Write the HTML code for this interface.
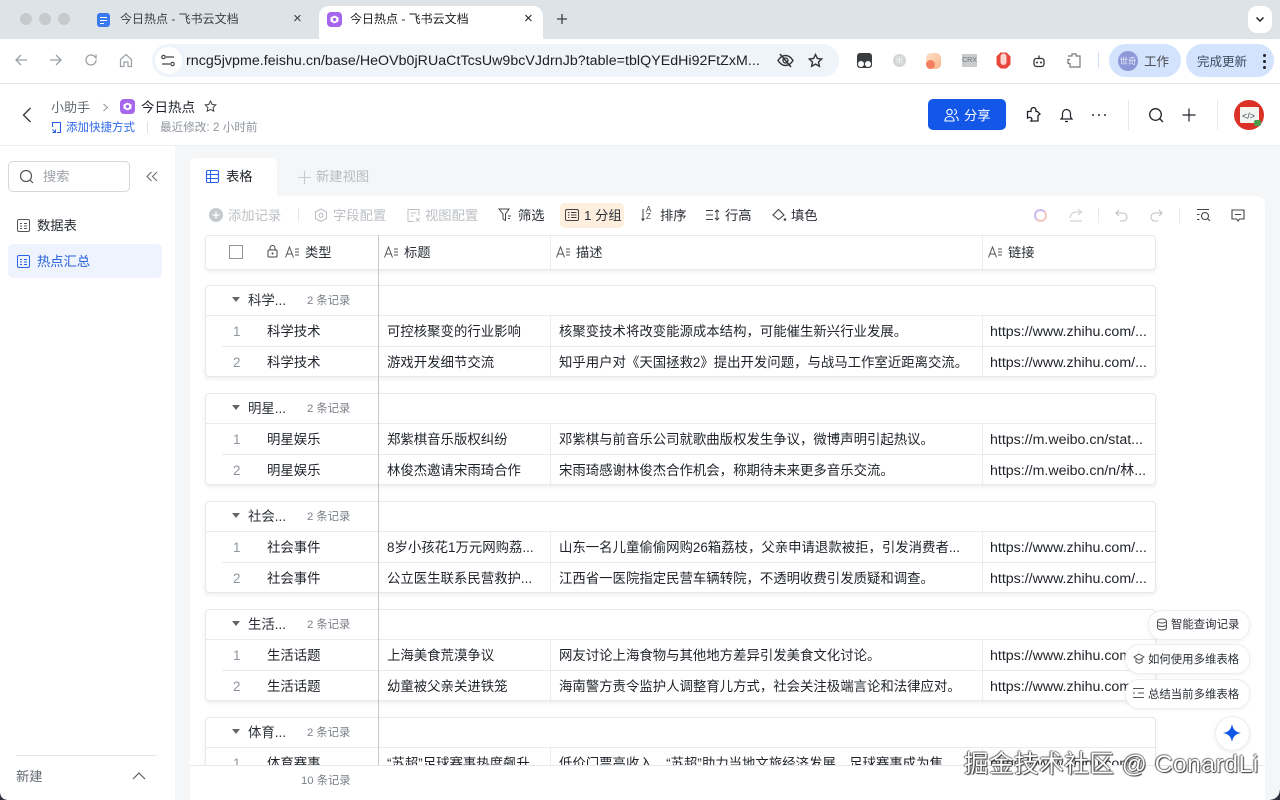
<!DOCTYPE html>
<html><head><meta charset="utf-8"><style>
html,body{margin:0;padding:0;width:1280px;height:800px;overflow:hidden;background:#fff}
body{position:relative;font-family:"Liberation Sans","Noto Sans CJK SC",sans-serif;color:#1f2329;font-size:13.4px}
.a{position:absolute}
.t{position:absolute;white-space:nowrap;line-height:18px;transform:translateY(1px)}
.n{transform:none}
.u{font-size:14.2px}
svg{position:absolute;overflow:visible}
.g{position:absolute;left:205px;width:949px;height:90px;border:1px solid #e8e9eb;border-radius:4px;background:#fff;box-shadow:0 2px 4px rgba(0,0,0,.07)}
.ln{position:absolute;background:#e9eaec}
</style></head><body>
<!-- chrome -->
<div class="a" style="left:0;top:0;width:1280px;height:39px;background:#dee3e8"></div>
<div class="a" style="left:20px;top:13px;width:12px;height:12px;border-radius:50%;background:#c6cacd"></div>
<div class="a" style="left:39px;top:13px;width:12px;height:12px;border-radius:50%;background:#c6cacd"></div>
<div class="a" style="left:58px;top:13px;width:12px;height:12px;border-radius:50%;background:#c6cacd"></div>
<div class="a" style="left:97px;top:13px;width:13px;height:14px;border-radius:3px;background:#3a78ee"></div>
<div class="a" style="left:100px;top:17px;width:7px;height:1px;background:#fff"></div>
<div class="a" style="left:100px;top:20px;width:7px;height:1px;background:#fff"></div>
<div class="a" style="left:100px;top:23px;width:4px;height:1px;background:#fff"></div>
<div class="t n" style="left:120px;top:10px;font-size:12px;color:#3c4043">今日热点 - 飞书云文档</div>
<div class="t n" style="left:293px;top:10px;font-size:15px;color:#3c4043">×</div>
<div class="a" style="left:319px;top:6px;width:224px;height:33px;background:#fff;border-radius:10px 10px 0 0"></div>
<div class="a" style="left:327px;top:12px;width:15px;height:15px;border-radius:4px;background:#a565ec"></div>
<svg style="left:330px;top:15px" width="9" height="9"><path d="M4.500 .5L8.500 2.500V6.500L4.500 8.500 .5 6.500V2.500z" fill="#fff"/><circle cx="4.500" cy="4.500" r="1.700" fill="#a565ec"/></svg>
<div class="t n" style="left:350px;top:10px;font-size:12px;color:#202124">今日热点 - 飞书云文档</div>
<div class="t n" style="left:524px;top:10px;font-size:15px;color:#202124">×</div>
<svg style="left:556px;top:13px" width="12" height="12"><path d="M6 1v10M1 6h10" stroke="#3c4043" stroke-width="1.300"/></svg>
<div class="a" style="left:1248px;top:6px;width:24px;height:27px;background:#fff;border-radius:9px"></div>
<svg style="left:1255px;top:16px" width="10" height="7"><path d="M1.500 1.500L5 5l3.500-3.500" stroke="#222" stroke-width="1.500" fill="none"/></svg>
<div class="a" style="left:0;top:39px;width:1280px;height:44px;background:#fff;border-radius:9px 9px 0 0"></div>
<div class="a" style="left:0;top:83px;width:1280px;height:1px;background:#e5e7ea"></div>
<svg style="left:14px;top:53px" width="14" height="14"><path d="M13 7H2M7 2L2 7l5 5" stroke="#9aa0a6" stroke-width="1.300" fill="none"/></svg>
<svg style="left:49px;top:53px" width="14" height="14"><path d="M1 7h11M7 2l5 5-5 5" stroke="#9aa0a6" stroke-width="1.300" fill="none"/></svg>
<svg style="left:84px;top:53px" width="14" height="14"><path d="M12 7a5 5 0 1 1-1.600-3.700L12 5V1.500" stroke="#9aa0a6" stroke-width="1.300" fill="none"/></svg>
<svg style="left:119px;top:53px" width="14" height="15"><path d="M1.500 6.500L7 1.500l5.500 5V13.500H9V9H5v4.500H1.500z" stroke="#9aa0a6" stroke-width="1.200" fill="none"/></svg>
<div class="a" style="left:152px;top:44px;width:687px;height:33px;border-radius:17px;background:#eff3fa"></div>
<div class="a" style="left:155px;top:47px;width:27px;height:27px;border-radius:50%;background:#fff"></div>
<svg style="left:161px;top:54px" width="14" height="13"><path d="M5 3h8M1 10h8" stroke="#444" stroke-width="1.300"/><circle cx="2.500" cy="3" r="1.700" fill="none" stroke="#444" stroke-width="1.200"/><circle cx="11.500" cy="10" r="1.700" fill="none" stroke="#444" stroke-width="1.200"/></svg>
<div class="t n" style="left:186px;top:52px;font-size:14.180px;color:#202124;letter-spacing:.05px">rncg5jvpme.feishu.cn/base/HeOVb0jRUaCtTcsUw9bcVJdrnJb?table=tblQYEdHi92FtZxM...</div>
<svg style="left:777px;top:53px" width="17" height="15"><path d="M1 7.500C3.500 3.500 6 2.500 8.500 2.500s5 1 7.500 5c-2.500 4-5 5-7.500 5S3.500 11.500 1 7.500z" stroke="#333" stroke-width="1.400" fill="none"/><circle cx="8.500" cy="7.500" r="2.500" fill="none" stroke="#333" stroke-width="1.300"/><path d="M3 1l11 13" stroke="#333" stroke-width="1.500"/></svg>
<svg style="left:808px;top:53px" width="15" height="15"><path d="M7.500 1.500l1.900 4 4.300.5-3.200 3 .9 4.300-3.900-2.200-3.900 2.200.9-4.300-3.200-3 4.300-.5z" stroke="#333" stroke-width="1.400" fill="none"/></svg>
<div class="a" style="left:857px;top:53px;width:15px;height:15px;border-radius:3px;background:#3a3d40"></div>
<div class="a" style="left:858px;top:61px;width:6px;height:6px;border-radius:50%;background:#fff"></div>
<div class="a" style="left:865px;top:61px;width:6px;height:6px;border-radius:50%;background:#fff"></div>
<div class="a" style="left:893px;top:54px;width:13px;height:13px;border-radius:50%;background:#d3d5d7"></div>
<div class="t n" style="left:893px;top:52px;width:13px;text-align:center;font-size:8px;color:#f4f4f4">米</div>
<div class="a" style="left:926px;top:53px;width:15px;height:16px;border-radius:5px;background:linear-gradient(135deg,#fde3c8,#f8b48a)"></div>
<div class="a" style="left:926px;top:60px;width:9px;height:9px;border-radius:50%;background:#f28060"></div>
<div class="a" style="left:962px;top:54px;width:15px;height:13px;background:#c9cbcd"></div>
<div class="t n" style="left:962px;top:52px;font-size:7px;width:15px;text-align:center;color:#6f7275">CRX</div>
<svg style="left:996px;top:52px" width="15" height="17"><path d="M4.500 .5h6L14.500 4.500v8l-4 4h-6L.5 12.500v-8z" fill="#e8463c"/><path d="M4.500 7V4.500a1 1 0 0 1 6 0V10a3 3 0 0 1-6 0z" fill="#fbd5d0"/></svg>
<svg style="left:1032px;top:54px" width="14" height="14"><rect x="2" y="4.500" width="10" height="8" rx="2.500" fill="none" stroke="#333" stroke-width="1.300"/><path d="M7 1.500v3" stroke="#333" stroke-width="1.300"/><circle cx="5" cy="8.500" r="1" fill="#333"/><circle cx="9" cy="8.500" r="1" fill="#333"/></svg>
<svg style="left:1066px;top:52px" width="16" height="17"><path d="M2 4h4V2h4v2h4v11H4v-3.500H2V7.500h2" stroke="#777" stroke-width="1.200" fill="none"/></svg>
<div class="a" style="left:1098px;top:52px;width:1px;height:16px;background:#cfe0f5"></div>
<div class="a" style="left:1109px;top:44px;width:72px;height:33px;border-radius:17px;background:#d3e3fd"></div>
<div class="a" style="left:1118px;top:51px;width:20px;height:20px;border-radius:50%;background:#8c97d8"></div>
<div class="t n" style="left:1118px;top:52px;width:20px;text-align:center;font-size:8.500px;color:#e6e9fa">世奇</div>
<div class="t" style="left:1144px;top:52px;font-size:12.500px;color:#44474a">工作</div>
<div class="a" style="left:1186px;top:44px;width:88px;height:33px;border-radius:17px;background:#d3e3fd"></div>
<div class="t" style="left:1197px;top:52px;font-size:12.500px;color:#3c4a5c">完成更新</div>
<div class="a" style="left:1263px;top:54px;width:3px;height:3px;border-radius:50%;background:#222"></div>
<div class="a" style="left:1263px;top:60px;width:3px;height:3px;border-radius:50%;background:#222"></div>
<div class="a" style="left:1263px;top:66px;width:3px;height:3px;border-radius:50%;background:#222"></div>

<!-- app header -->
<svg style="left:21px;top:107px" width="12" height="16"><path d="M9.500 1L2.500 8l7 7" stroke="#333" stroke-width="1.300" fill="none"/></svg>
<div class="t" style="left:51px;top:98px;font-size:13px;color:#646a73">小助手</div>
<svg style="left:102px;top:103px" width="7" height="9"><path d="M1.500 1l4 3.500-4 3.500" stroke="#8f959e" stroke-width="1" fill="none"/></svg>
<div class="a" style="left:120px;top:99px;width:15px;height:15px;border-radius:4px;background:#a565ec"></div>
<svg style="left:123px;top:102px" width="9" height="9"><path d="M4.500 .5L8.500 2.500V6.500L4.500 8.500 .5 6.500V2.500z" fill="#fff"/><circle cx="4.500" cy="4.500" r="1.700" fill="#a565ec"/></svg>
<div class="t" style="left:141px;top:98px;font-size:13.500px;color:#1f2329">今日热点</div>
<svg style="left:204px;top:100px" width="13" height="13"><path d="M6.500 1l1.600 3.400 3.700.5-2.700 2.600.7 3.700-3.300-1.800-3.300 1.800.7-3.700L1.200 4.900l3.700-.5z" stroke="#444" stroke-width="1" fill="none"/></svg>
<svg style="left:51px;top:121px" width="11" height="13"><path d="M1.500 6V1.500h8v10H6M1.500 8.500l3 3M4.500 8.500v3h-3" stroke="#2a62e8" stroke-width="1.100" fill="none"/></svg>
<div class="t" style="left:66px;top:118px;font-size:11.500px;color:#2f6ae8">添加快捷方式</div>
<div class="a" style="left:147px;top:122px;width:1px;height:11px;background:#dee0e3"></div>
<div class="t" style="left:160px;top:118px;font-size:11.500px;color:#8f959e;letter-spacing:.1px">最近修改: 2 小时前</div>
<div class="a" style="left:928px;top:99px;width:78px;height:31px;border-radius:5px;background:#1257e8"></div>
<svg style="left:944px;top:108px" width="15" height="14"><circle cx="5.500" cy="4" r="2.700" fill="none" stroke="#fff" stroke-width="1.100"/><path d="M1 13c0-3 2-4.500 4.500-4.500S10 10 10 13zM10 1.500a2.500 2.500 0 0 1 0 5M12 8.500c1.300.6 2.200 2 2.200 4.500" fill="none" stroke="#fff" stroke-width="1.100"/></svg>
<div class="t" style="left:964px;top:106px;font-size:13.300px;color:#fff">分享</div>
<svg style="left:1026px;top:106px" width="16" height="17"><path d="M1.500 5.500h3.500c-.5-2.500 1-4 2.500-4s3 1.500 2.500 4h1.500l2.500 2.500-2 1.500v5.500H5c1.500-1.500 1-3-.5-3.500-1-.3-2 0-3 .5z" stroke="#1f2329" stroke-width="1.300" fill="none"/></svg>
<svg style="left:1059px;top:107px" width="15" height="16"><path d="M2 12h11l-1.500-2V6.500a4 4 0 0 0-8 0V10zM6 14.500h3" stroke="#1f2329" stroke-width="1.200" fill="none"/></svg>
<div class="a" style="left:1092px;top:114px;width:2px;height:2px;border-radius:50%;background:#333"></div>
<div class="a" style="left:1098px;top:114px;width:2px;height:2px;border-radius:50%;background:#333"></div>
<div class="a" style="left:1104px;top:114px;width:2px;height:2px;border-radius:50%;background:#333"></div>
<div class="a" style="left:1128px;top:100px;width:1px;height:30px;background:#e8e9eb"></div>
<svg style="left:1148px;top:107px" width="17" height="17"><circle cx="7.500" cy="7.500" r="5.800" fill="none" stroke="#1f2329" stroke-width="1.300"/><path d="M11.500 11.500l3.500 3.500" stroke="#1f2329" stroke-width="1.300"/></svg>
<svg style="left:1182px;top:108px" width="14" height="14"><path d="M7 .5v13M.5 7h13" stroke="#1f2329" stroke-width="1.200"/></svg>
<div class="a" style="left:1217px;top:100px;width:1px;height:30px;background:#e8e9eb"></div>
<div class="a" style="left:1234px;top:100px;width:30px;height:30px;border-radius:50%;background:#dc3127"></div>
<div class="a" style="left:1240px;top:107px;width:19px;height:16px;background:#f3f3f0;border-radius:1px"></div>
<div class="t n" style="left:1242px;top:107px;font-size:9px;color:#345;">&lt;/&gt;</div>
<div class="a" style="left:1254px;top:120px;width:7px;height:6px;background:#4c9a4c;border-radius:2px"></div>

<!-- page -->
<div class="a" style="left:0;top:145px;width:1280px;height:1px;background:#eceef0"></div>
<div class="a" style="left:175px;top:146px;width:1105px;height:654px;background:#f5f6f7"></div>
<div class="a" style="left:0;top:146px;width:175px;height:654px;background:#fff"></div>
<!-- sidebar -->
<div class="a" style="left:8px;top:161px;width:120px;height:29px;border:1px solid #d6d8db;border-radius:5px"></div>
<svg style="left:19px;top:169px" width="16" height="16"><circle cx="7" cy="7" r="5.500" fill="none" stroke="#555" stroke-width="1.200"/><path d="M11 11l3 3" stroke="#555" stroke-width="1.200"/></svg>
<div class="t" style="left:43px;top:167px;font-size:13.300px;color:#a0a4aa">搜索</div>
<svg style="left:146px;top:171px" width="12" height="11"><path d="M5.500 1L1 5.500 5.500 10M11 1L6.500 5.500 11 10" stroke="#666" stroke-width="1" fill="none"/></svg>
<div class="a" style="left:8px;top:244px;width:154px;height:34px;border-radius:5px;background:#eef3fe"></div>
<svg style="left:17px;top:219px" width="13" height="13"><rect x=".5" y=".5" width="12" height="12" rx="1.500" fill="none" stroke="#555" stroke-width="1"/><path d="M3 4.500h2M7 4.500h3M3 7h2M7 7h3M3 9.500h2M7 9.500h3" stroke="#555" stroke-width="1"/></svg>
<div class="t" style="left:37px;top:216px;font-size:13.300px;color:#2b2f36">数据表</div>
<svg style="left:17px;top:255px" width="13" height="13"><rect x=".5" y=".5" width="12" height="12" rx="1.500" fill="none" stroke="#2a62e8" stroke-width="1"/><path d="M3 4.500h2M7 4.500h3M3 7h2M7 7h3M3 9.500h2M7 9.500h3" stroke="#2a62e8" stroke-width="1"/></svg>
<div class="t" style="left:37px;top:252px;font-size:13.300px;color:#2a62d8">热点汇总</div>
<div class="a" style="left:16px;top:755px;width:141px;height:1px;background:#e6e8ea"></div>
<div class="t" style="left:16px;top:767px;font-size:13.300px;color:#646a73">新建</div>
<svg style="left:132px;top:771px" width="14" height="9"><path d="M1 8l6-6 6 6" stroke="#555" stroke-width="1.100" fill="none"/></svg>

<!-- main panel -->
<div class="a" style="left:190px;top:158px;width:87px;height:40px;background:#fff;border-radius:6px 6px 0 0"></div>
<div class="a" style="left:190px;top:196px;width:1075px;height:604px;background:#fff;border-radius:0 8px 0 0"></div>
<svg style="left:206px;top:170px" width="13" height="13"><rect x=".5" y=".5" width="12" height="12" rx="1.500" fill="none" stroke="#2a62e8" stroke-width="1.100"/><path d="M0 4.500h13M0 8.500h13M4.500 0v13" stroke="#2a62e8" stroke-width="1.100"/></svg>
<div class="t" style="left:226px;top:167px;font-size:13.300px;color:#1f2329">表格</div>
<svg style="left:298px;top:171px" width="13" height="13"><path d="M6.500 0v13M0 6.500h13" stroke="#c6c9cd" stroke-width="1.100"/></svg>
<div class="t" style="left:316px;top:167px;font-size:13.300px;color:#b8bcc1">新建视图</div>
<!-- toolbar -->
<div class="a" style="left:209px;top:208px;width:14px;height:14px;border-radius:50%;background:#c6c9cd"></div>
<svg style="left:212px;top:211px" width="8" height="8"><path d="M4 .5v7M.5 4h7" stroke="#fff" stroke-width="1.300"/></svg>
<div class="t" style="left:228px;top:206px;font-size:13.300px;color:#bcc0c5">添加记录</div>
<div class="a" style="left:298px;top:208px;width:1px;height:14px;background:#e8e9eb"></div>
<svg style="left:314px;top:208px" width="14" height="15"><path d="M7 1l5.500 3v6.500L7 13.500 1.500 10.500V4z" stroke="#bcc0c5" stroke-width="1.100" fill="none"/><circle cx="7" cy="7.300" r="2" fill="none" stroke="#bcc0c5" stroke-width="1.100"/></svg>
<div class="t" style="left:333px;top:206px;font-size:13.300px;color:#bcc0c5">字段配置</div>
<svg style="left:407px;top:209px" width="14" height="13"><path d="M7 12.500H1V.5h11v6M3.500 4h6M3.500 7h3M9 9l3.500 3.500M12.500 9L9 12.500" stroke="#bcc0c5" stroke-width="1" fill="none"/></svg>
<div class="t" style="left:425px;top:206px;font-size:13.300px;color:#bcc0c5">视图配置</div>
<svg style="left:498px;top:208px" width="15" height="14"><path d="M1 1h10L7.500 6v6.500L5 11V6zM10 8h3M10 10.500h2" stroke="#444" stroke-width="1" fill="none"/></svg>
<div class="t" style="left:518px;top:206px;font-size:13.300px;color:#2b2f36">筛选</div>
<div class="a" style="left:560px;top:203px;width:64px;height:25px;border-radius:5px;background:#fdeede"></div>
<svg style="left:565px;top:209px" width="14" height="12"><rect x=".5" y=".5" width="13" height="11" rx="1.500" fill="none" stroke="#444" stroke-width="1"/><path d="M3 3.500h1.500M6 3.500h5.500M3 6h1.500M6 6h5.500M3 8.500h1.500M6 8.500h5.500" stroke="#444" stroke-width=".9"/></svg>
<div class="t" style="left:584px;top:206px;font-size:13.300px;color:#2b2f36">1 分组</div>
<svg style="left:641px;top:208px" width="13" height="15"><path d="M2 1v11M.5 10.500L2 12.500l1.500-2" stroke="#444" stroke-width="1" fill="none"/></svg>
<div class="t" style="left:646px;top:205px;font-size:8px;line-height:7px;color:#444">A<br>Z</div>
<div class="t" style="left:660px;top:206px;font-size:13.300px;color:#2b2f36">排序</div>
<svg style="left:706px;top:209px" width="14" height="12"><path d="M0 1.500h7M0 6h7M0 10.500h7M11 1v10M9 3l2-2 2 2M9 9l2 2 2-2" stroke="#444" stroke-width="1" fill="none"/></svg>
<div class="t" style="left:725px;top:206px;font-size:13.300px;color:#2b2f36">行高</div>
<svg style="left:772px;top:208px" width="15" height="14"><path d="M6.500 1.500L12 7l-5.500 4.500L1 7z" stroke="#444" stroke-width="1.100" fill="none"/><circle cx="13" cy="11.500" r="1.300" fill="#444"/></svg>
<div class="t" style="left:791px;top:206px;font-size:13.300px;color:#2b2f36">填色</div>
<div class="a" style="left:1034px;top:209px;width:9px;height:9px;border-radius:50%;border:2.500px solid #c9b9f0;border-right-color:#f6c6c0;border-bottom-color:#f6c6c0"></div>
<svg style="left:1069px;top:208px" width="14" height="14"><path d="M1 10c0-4 3-6 7-6h3M9 1l3.500 3L9 7M1 13h12" stroke="#c6c9cd" stroke-width="1" fill="none"/></svg>
<div class="a" style="left:1098px;top:208px;width:1px;height:15px;background:#e8e9eb"></div>
<svg style="left:1115px;top:209px" width="14" height="13"><path d="M4 1L1 4l3 3M1 4h7a4 4 0 0 1 0 8H5" stroke="#bcc0c5" stroke-width="1.100" fill="none"/></svg>
<svg style="left:1149px;top:209px" width="14" height="13"><path d="M10 1l3 3-3 3M13 4H6a4 4 0 0 0 0 8h3" stroke="#bcc0c5" stroke-width="1.100" fill="none"/></svg>
<div class="a" style="left:1179px;top:208px;width:1px;height:15px;background:#e8e9eb"></div>
<svg style="left:1196px;top:209px" width="15" height="13"><path d="M1 .5h12M1 5.500h2.500M1 10.500h2.500" stroke="#444" stroke-width="1"/><circle cx="9" cy="7" r="3.500" fill="none" stroke="#444" stroke-width="1.100"/><path d="M11.500 9.500l2.500 2.500" stroke="#444" stroke-width="1.100"/></svg>
<svg style="left:1231px;top:209px" width="14" height="13"><path d="M1 1h12v9H8.500L7 12 5.500 10H1zM4 5.500h6" stroke="#444" stroke-width="1.100" fill="none"/></svg>

<!-- table header -->
<div class="a" style="left:205px;top:235px;width:949px;height:33px;border:1px solid #e8e9eb;border-radius:4px;box-shadow:0 2px 4px rgba(0,0,0,.07);background:#fff"></div>
<div class="ln" style="left:550px;top:236px;width:1px;height:33px"></div>
<div class="ln" style="left:982px;top:236px;width:1px;height:33px"></div>
<div class="a" style="left:229px;top:245px;width:12px;height:12px;border:1px solid #8f959e"></div>
<svg style="left:267px;top:245px" width="11" height="13"><rect x="1" y="5" width="9" height="7" rx="1" fill="none" stroke="#444" stroke-width="1"/><path d="M3 5V3a2.500 2.500 0 0 1 5 0v2" fill="none" stroke="#444" stroke-width="1"/><circle cx="5.500" cy="8.500" r="1" fill="#444"/></svg>
<svg style="left:285px;top:246px" width="16" height="12"><path d="M.5 11.500L4.500 1l4 10.500M2 8h5M10 3h4M10 6h4M10 9h4" stroke="#555" stroke-width="1" fill="none"/></svg>
<div class="t" style="left:305px;top:243px;font-size:13.300px;color:#2b2f36">类型</div>
<svg style="left:384px;top:246px" width="16" height="12"><path d="M.5 11.500L4.500 1l4 10.500M2 8h5M10 3h4M10 6h4M10 9h4" stroke="#555" stroke-width="1" fill="none"/></svg>
<div class="t" style="left:404px;top:243px;font-size:13.300px;color:#2b2f36">标题</div>
<svg style="left:556px;top:246px" width="16" height="12"><path d="M.5 11.500L4.500 1l4 10.500M2 8h5M10 3h4M10 6h4M10 9h4" stroke="#555" stroke-width="1" fill="none"/></svg>
<div class="t" style="left:576px;top:243px;font-size:13.300px;color:#2b2f36">描述</div>
<svg style="left:988px;top:246px" width="16" height="12"><path d="M.5 11.500L4.500 1l4 10.500M2 8h5M10 3h4M10 6h4M10 9h4" stroke="#555" stroke-width="1" fill="none"/></svg>
<div class="t" style="left:1008px;top:243px;font-size:13.300px;color:#2b2f36">链接</div>

<!-- group 1 -->
<div class="g" style="top:285px"></div>
<div class="ln" style="left:206px;top:315px;width:949px;height:1px"></div>
<div class="ln" style="left:222px;top:346px;width:933px;height:1px"></div>
<div class="ln" style="left:550px;top:316px;width:1px;height:60px"></div>
<div class="ln" style="left:982px;top:316px;width:1px;height:60px"></div>
<svg style="left:232px;top:297px" width="8" height="6"><path d="M0 0h8L4 5z" fill="#666"/></svg>
<div class="t" style="left:248px;top:291px;color:#2b2f36">科学...</div>
<div class="t" style="left:307px;top:291px;font-size:11.300px;color:#7b8088">2 条记录</div>
<div class="t" style="left:233px;top:322px;color:#8f959e">1</div>
<div class="t" style="left:233px;top:353px;color:#8f959e">2</div>
<div class="t" style="left:267px;top:322px">科学技术</div>
<div class="t" style="left:267px;top:353px">科学技术</div>
<div class="t" style="left:387px;top:322px">可控核聚变的行业影响</div>
<div class="t" style="left:387px;top:353px">游戏开发细节交流</div>
<div class="t" style="left:559px;top:322px">核聚变技术将改变能源成本结构，可能催生新兴行业发展。</div>
<div class="t" style="left:559px;top:353px">知乎用户对《天国拯救2》提出开发问题，与战马工作室近距离交流。</div>
<div class="t u" style="left:990px;top:322px">https://www.zhihu.com/...</div>
<div class="t u" style="left:990px;top:353px">https://www.zhihu.com/...</div>

<!-- group 2 -->
<div class="g" style="top:393px"></div>
<div class="ln" style="left:206px;top:423px;width:949px;height:1px"></div>
<div class="ln" style="left:222px;top:454px;width:933px;height:1px"></div>
<div class="ln" style="left:550px;top:424px;width:1px;height:60px"></div>
<div class="ln" style="left:982px;top:424px;width:1px;height:60px"></div>
<svg style="left:232px;top:405px" width="8" height="6"><path d="M0 0h8L4 5z" fill="#666"/></svg>
<div class="t" style="left:248px;top:399px;color:#2b2f36">明星...</div>
<div class="t" style="left:307px;top:399px;font-size:11.300px;color:#7b8088">2 条记录</div>
<div class="t" style="left:233px;top:430px;color:#8f959e">1</div>
<div class="t" style="left:233px;top:461px;color:#8f959e">2</div>
<div class="t" style="left:267px;top:430px">明星娱乐</div>
<div class="t" style="left:267px;top:461px">明星娱乐</div>
<div class="t" style="left:387px;top:430px">郑紫棋音乐版权纠纷</div>
<div class="t" style="left:387px;top:461px">林俊杰邀请宋雨琦合作</div>
<div class="t" style="left:559px;top:430px">邓紫棋与前音乐公司就歌曲版权发生争议，微博声明引起热议。</div>
<div class="t" style="left:559px;top:461px">宋雨琦感谢林俊杰合作机会，称期待未来更多音乐交流。</div>
<div class="t u" style="left:990px;top:430px">https://m.weibo.cn/stat...</div>
<div class="t u" style="left:990px;top:461px">https://m.weibo.cn/n/林...</div>

<!-- group 3 -->
<div class="g" style="top:501px"></div>
<div class="ln" style="left:206px;top:531px;width:949px;height:1px"></div>
<div class="ln" style="left:222px;top:562px;width:933px;height:1px"></div>
<div class="ln" style="left:550px;top:532px;width:1px;height:60px"></div>
<div class="ln" style="left:982px;top:532px;width:1px;height:60px"></div>
<svg style="left:232px;top:513px" width="8" height="6"><path d="M0 0h8L4 5z" fill="#666"/></svg>
<div class="t" style="left:248px;top:507px;color:#2b2f36">社会...</div>
<div class="t" style="left:307px;top:507px;font-size:11.300px;color:#7b8088">2 条记录</div>
<div class="t" style="left:233px;top:538px;color:#8f959e">1</div>
<div class="t" style="left:233px;top:569px;color:#8f959e">2</div>
<div class="t" style="left:267px;top:538px">社会事件</div>
<div class="t" style="left:267px;top:569px">社会事件</div>
<div class="t" style="left:387px;top:538px">8岁小孩花1万元网购荔...</div>
<div class="t" style="left:387px;top:569px">公立医生联系民营救护...</div>
<div class="t" style="left:559px;top:538px">山东一名儿童偷偷网购26箱荔枝，父亲申请退款被拒，引发消费者...</div>
<div class="t" style="left:559px;top:569px">江西省一医院指定民营车辆转院，不透明收费引发质疑和调查。</div>
<div class="t u" style="left:990px;top:538px">https://www.zhihu.com/...</div>
<div class="t u" style="left:990px;top:569px">https://www.zhihu.com/...</div>

<!-- group 4 -->
<div class="g" style="top:609px"></div>
<div class="ln" style="left:206px;top:639px;width:949px;height:1px"></div>
<div class="ln" style="left:222px;top:670px;width:933px;height:1px"></div>
<div class="ln" style="left:550px;top:640px;width:1px;height:60px"></div>
<div class="ln" style="left:982px;top:640px;width:1px;height:60px"></div>
<svg style="left:232px;top:621px" width="8" height="6"><path d="M0 0h8L4 5z" fill="#666"/></svg>
<div class="t" style="left:248px;top:615px;color:#2b2f36">生活...</div>
<div class="t" style="left:307px;top:615px;font-size:11.300px;color:#7b8088">2 条记录</div>
<div class="t" style="left:233px;top:646px;color:#8f959e">1</div>
<div class="t" style="left:233px;top:677px;color:#8f959e">2</div>
<div class="t" style="left:267px;top:646px">生活话题</div>
<div class="t" style="left:267px;top:677px">生活话题</div>
<div class="t" style="left:387px;top:646px">上海美食荒漠争议</div>
<div class="t" style="left:387px;top:677px">幼童被父亲关进铁笼</div>
<div class="t" style="left:559px;top:646px">网友讨论上海食物与其他地方差异引发美食文化讨论。</div>
<div class="t" style="left:559px;top:677px">海南警方责令监护人调整育儿方式，社会关注极端言论和法律应对。</div>
<div class="t u" style="left:990px;top:646px">https://www.zhihu.com/...</div>
<div class="t u" style="left:990px;top:677px">https://www.zhihu.com/...</div>

<!-- group 5 -->
<div class="g" style="top:717px"></div>
<div class="ln" style="left:206px;top:747px;width:949px;height:1px"></div>
<div class="ln" style="left:550px;top:748px;width:1px;height:20px"></div>
<div class="ln" style="left:982px;top:748px;width:1px;height:20px"></div>
<svg style="left:232px;top:729px" width="8" height="6"><path d="M0 0h8L4 5z" fill="#666"/></svg>
<div class="t" style="left:248px;top:723px;color:#2b2f36">体育...</div>
<div class="t" style="left:307px;top:723px;font-size:11.300px;color:#7b8088">2 条记录</div>
<div class="t" style="left:233px;top:754px;color:#8f959e">1</div>
<div class="t" style="left:267px;top:754px">体育赛事</div>
<div class="t" style="left:387px;top:754px">“苏超”足球赛事热度飙升</div>
<div class="t" style="left:559px;top:754px">低价门票高收入，“苏超”助力当地文旅经济发展，足球赛事成为焦...</div>
<div class="t u" style="left:990px;top:754px">https://www.zhihu.com/...</div>

<!-- frozen divider -->
<div class="a" style="left:378px;top:235px;width:1px;height:530px;background:#c5c8cc"></div>
<!-- footer -->
<div class="a" style="left:190px;top:765px;width:1075px;height:35px;background:#fff;border-top:1px solid #e6e8ea;box-sizing:border-box"></div>
<div class="t n" style="left:301px;top:772px;font-size:11.300px;color:#7b8088">10 条记录</div>

<!-- AI suggestions -->
<div class="a" style="left:1148px;top:610px;width:100px;height:28px;background:#fff;border:1px solid #eceef0;border-radius:14px;box-shadow:0 1px 4px rgba(0,0,0,.06)"></div>
<svg style="left:1156px;top:618px" width="12" height="13"><ellipse cx="6" cy="3" rx="4.500" ry="2" fill="none" stroke="#555"/><path d="M1.500 3v7c0 1 2 2 4.500 2s4.500-1 4.500-2V3M1.500 6.500c0 1 2 2 4.500 2s4.500-1 4.500-2" fill="none" stroke="#555"/></svg>
<div class="t" style="left:1171px;top:615px;font-size:11.400px;color:#2b2f36">智能查询记录</div>
<div class="a" style="left:1125px;top:644px;width:123px;height:28px;background:#fff;border:1px solid #eceef0;border-radius:14px;box-shadow:0 1px 4px rgba(0,0,0,.06)"></div>
<svg style="left:1133px;top:653px" width="12" height="11"><path d="M6 1l5 3-5 3-5-3zM3 5.500V9l3 1.500L9 9V5.500" fill="none" stroke="#555"/></svg>
<div class="t" style="left:1148px;top:650px;font-size:11.400px;color:#2b2f36">如何使用多维表格</div>
<div class="a" style="left:1125px;top:679px;width:123px;height:28px;background:#fff;border:1px solid #eceef0;border-radius:14px;box-shadow:0 1px 4px rgba(0,0,0,.06)"></div>
<svg style="left:1133px;top:688px" width="11" height="10"><path d="M0 .5h11M0 9.500h11M0 5h2M5 5h6" stroke="#555"/></svg>
<div class="t" style="left:1148px;top:685px;font-size:11.400px;color:#2b2f36">总结当前多维表格</div>
<div class="a" style="left:1215px;top:716px;width:33px;height:33px;border-radius:50%;background:#fff;border:1px solid #eceef0;box-shadow:0 1px 4px rgba(0,0,0,.08)"></div>
<svg style="left:1223px;top:724px" width="18" height="18"><path d="M9 0c1 5 3 8 9 9-6 1-8 4-9 9-1-5-3-8-9-9 6-1 8-4 9-9z" fill="#1257e8"/></svg>

<!-- watermark -->
<div class="t" style="left:964px;top:749px;font-size:24.500px;line-height:30px;color:#fff;letter-spacing:.58px;text-shadow:1px 1px 1px #333,-1px 0 1px #555,0 -1px 1px #777">掘金技术社区 @ ConardLi</div>
<!-- window corners -->
<div class="a" style="left:1270px;top:790px;width:10px;height:10px;background:radial-gradient(circle at 0 0,transparent 9.500px,#2c2f38 10px)"></div>
<div class="a" style="left:0;top:793px;width:7px;height:7px;background:radial-gradient(circle at 100% 0,transparent 6.500px,#2c2f38 7px)"></div>
</body></html>
